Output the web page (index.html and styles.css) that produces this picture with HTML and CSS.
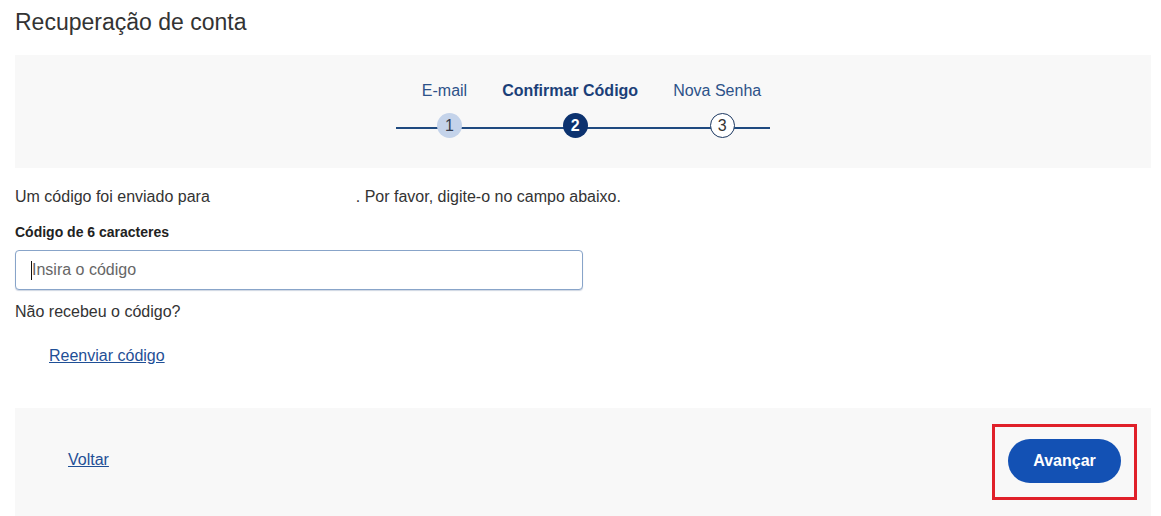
FILE: index.html
```html
<!DOCTYPE html>
<html lang="pt-BR">
<head>
<meta charset="utf-8">
<title>Recuperação de conta</title>
<link rel="stylesheet" href="styles.css">
</head>
<body>
<div class="page">
  <h1 class="title">Recuperação de conta</h1>

  <div class="panel stepper-panel">
    <div class="stepper">
      <div class="step done">
        <span class="step-label">E-mail</span>
        <span class="step-circle">1</span>
      </div>
      <div class="step active">
        <span class="step-label">Confirmar Código</span>
        <span class="step-circle">2</span>
      </div>
      <div class="step todo">
        <span class="step-label">Nova Senha</span>
        <span class="step-circle">3</span>
      </div>
    </div>
  </div>

  <p class="info">Um código foi enviado para<span class="redacted"></span>. Por favor, digite-o no campo abaixo.</p>

  <label class="field-label" for="code">Código de 6 caracteres</label>
  <div class="input-wrap">
    <span class="caret"></span>
    <input id="code" class="code-input" type="text" placeholder="Insira o código">
  </div>

  <p class="question">Não recebeu o código?</p>
  <a class="link resend" href="#">Reenviar código</a>

  <div class="panel footer">
    <a class="link back" href="#">Voltar</a>
    <div class="highlight">
      <button class="btn-primary" type="button">Avançar</button>
    </div>
  </div>
</div>
</body>
</html>
```

FILE: styles.css
```css
* { box-sizing: border-box; }

html, body {
  margin: 0;
  padding: 0;
  background: #ffffff;
  font-family: "Liberation Sans", Arial, sans-serif;
  color: #333333;
}

.page {
  padding: 0 10px 0 15px;
}

.title {
  margin: 9px 0 20px;
  font-size: 23px;
  font-weight: normal;
  line-height: 26px;
  color: #333333;
}

.panel {
  background: #f8f8f8;
}

.stepper-panel {
  height: 113px;
  padding-top: 27px;
  display: flex;
  justify-content: center;
}

.stepper {
  position: relative;
  display: flex;
  margin-left: 0;
}

.stepper::before {
  content: "";
  position: absolute;
  left: 0;
  right: 0;
  top: 45px;
  height: 2px;
  background: #1f4a80;
}

.step {
  display: flex;
  flex-direction: column;
  align-items: center;
  padding: 0 9px 0 26px;
}

.step-label {
  font-size: 16px;
  line-height: 18px;
  color: #2d5289;
  white-space: nowrap;
}

.step.active .step-label {
  font-weight: bold;
  color: #1b3f78;
}

.step-circle {
  position: relative;
  margin-top: 13px;
  margin-left: 10px;
  width: 25px;
  height: 25px;
  border-radius: 50%;
  display: flex;
  align-items: center;
  justify-content: center;
  font-size: 16px;
  line-height: 1;
  z-index: 1;
}

.step.done .step-circle {
  background: #c4d3ea;
  color: #333a4a;
}

.step.active .step-circle {
  background: #0c326f;
  color: #ffffff;
  font-weight: bold;
}

.step.todo .step-circle {
  background: #ffffff;
  border: 1px solid #1b3760;
  color: #333333;
}

.info {
  margin: 20px 0 0;
  font-size: 16px;
  line-height: 18px;
  color: #333333;
}

.redacted {
  display: inline-block;
  width: 146px;
}

.field-label {
  display: block;
  margin-top: 18px;
  font-size: 14px;
  font-weight: bold;
  line-height: 16px;
  color: #222222;
}

.input-wrap {
  position: relative;
  margin-top: 10px;
  width: 568px;
}

.code-input {
  display: block;
  width: 100%;
  height: 40px;
  border: 1px solid #88a4c9;
  border-radius: 4px;
  padding: 0 16px;
  font-family: "Liberation Sans", Arial, sans-serif;
  font-size: 16px;
  color: #333333;
  background: #ffffff;
  box-shadow: 0 1px 1px rgba(60, 90, 140, 0.25);
  outline: none;
}

.code-input::placeholder {
  color: #666666;
}

.caret {
  position: absolute;
  left: 16px;
  top: 11px;
  width: 1px;
  height: 19px;
  background: #111111;
  z-index: 1;
}

.question {
  margin: 13px 0 0;
  font-size: 16px;
  line-height: 18px;
  color: #333333;
}

.link {
  color: #1f4f96;
  text-decoration: underline;
  font-size: 16px;
  line-height: 18px;
}

.resend {
  display: inline-block;
  margin: 26px 0 0 34px;
}

.footer {
  margin-top: 43px;
  display: flex;
  align-items: center;
  justify-content: space-between;
  padding: 16px 14px 17px 53px;
}

.back {
  margin-bottom: 5px;
}

.highlight {
  border: 3px solid #e0202a;
  padding: 12px 13px 14px;
}

.btn-primary {
  display: block;
  width: 113px;
  height: 44px;
  border: none;
  border-radius: 22px;
  background: #1351b4;
  color: #ffffff;
  font-family: "Liberation Sans", Arial, sans-serif;
  font-size: 16px;
  font-weight: bold;
  cursor: pointer;
}
```
